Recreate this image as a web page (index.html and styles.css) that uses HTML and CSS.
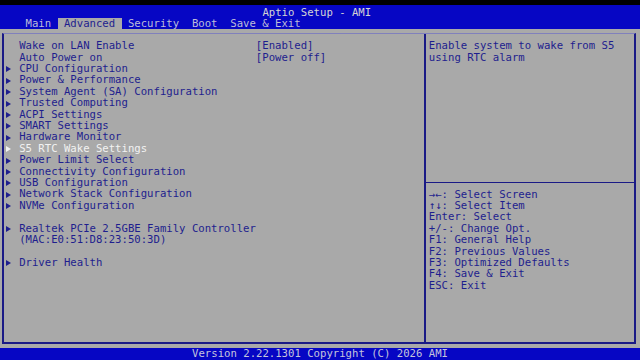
FILE: index.html
```html
<!DOCTYPE html>
<html lang="en">
<head>
    <meta charset="UTF-8">
    <title>Aptio Setup - AMI</title>
    <link rel="stylesheet" href="styles.css">
</head>
<body>
    <div class="screen">
        <header class="topbar">
            <div class="title">Aptio Setup - AMI</div>
            <nav class="tabs">
                <span class="tab">Main</span>
                <span class="tab active">Advanced</span>
                <span class="tab">Security</span>
                <span class="tab">Boot</span>
                <span class="tab">Save &amp; Exit</span>
            </nav>
        </header>
        <main class="body">
            <div class="frame">
                <section class="menu">
                    <div class="row setting"><span class="label">Wake on LAN Enable</span><span class="value">[Enabled]</span></div>
                    <div class="row setting"><span class="label">Auto Power on</span><span class="value">[Power off]</span></div>
                    <div class="row link">CPU Configuration</div>
                    <div class="row link">Power &amp; Performance</div>
                    <div class="row link">System Agent (SA) Configuration</div>
                    <div class="row link">Trusted Computing</div>
                    <div class="row link">ACPI Settings</div>
                    <div class="row link">SMART Settings</div>
                    <div class="row link">Hardware Monitor</div>
                    <div class="row link selected">S5 RTC Wake Settings</div>
                    <div class="row link">Power Limit Select</div>
                    <div class="row link">Connectivity Configuration</div>
                    <div class="row link">USB Configuration</div>
                    <div class="row link">Network Stack Configuration</div>
                    <div class="row link">NVMe Configuration</div>
                    <div class="row"></div>
                    <div class="row link">Realtek PCIe 2.5GBE Family Controller</div>
                    <div class="row sub">(MAC:E0:51:D8:23:50:3D)</div>
                    <div class="row"></div>
                    <div class="row link">Driver Health</div>
                </section>
                <aside class="side">
                    <div class="help">Enable system to wake from S5 using RTC alarm</div>
                    <div class="rule"></div>
                    <ul class="keys">
                        <li>&rarr;&larr;: Select Screen</li>
                        <li>&uarr;&darr;: Select Item</li>
                        <li>Enter: Select</li>
                        <li>+/-: Change Opt.</li>
                        <li>F1: General Help</li>
                        <li>F2: Previous Values</li>
                        <li>F3: Optimized Defaults</li>
                        <li>F4: Save &amp; Exit</li>
                        <li>ESC: Exit</li>
                    </ul>
                </aside>
            </div>
        </main>
        <footer class="footer">Version 2.22.1301 Copyright (C) 2026 AMI</footer>
    </div>
</body>
</html>
```

FILE: styles.css
```css
body {
    margin: 0;
    background: #000;
    font-family: "DejaVu Sans Mono", "Liberation Mono", monospace;
    font-size: 10.63px;
    line-height: 11.42px;
    color: #1e1e8e;
    overflow: hidden;
}

.screen {
    width: 640px;
    height: 360px;
    display: flex;
    flex-direction: column;
}

.topbar {
    margin-top: 5px;
    padding-top: 1.6px;
    height: 22.84px;
    background: #0606c4;
}

.title {
    height: 11.42px;
    padding-right: 1ch;
    text-align: center;
    color: #d4d4d4;
}

.tabs {
    display: flex;
    height: 11.42px;
    padding-left: 3ch;
}

.tab {
    padding: 0 1ch;
    color: #bcbcd8;
    white-space: pre;
}

.tab.active {
    background: #a9a9a9;
    color: #1e1e8e;
}

.body {
    flex: 1;
    background: #a9a9a9;
    padding-top: 3.4px;
}

.frame {
    display: flex;
    box-sizing: border-box;
    width: 634px;
    height: 311px;
    margin-left: 2px;
    border: 2px solid #1a1a86;
    border-top: 1px solid #8080bc;
}

.menu {
    box-sizing: border-box;
    width: 422px;
    padding: 6.3px 0 0 2.4px;
    border-right: 2px solid #1a1a86;
}

.row {
    height: 11.42px;
    white-space: pre;
}

.setting .label {
    display: inline-block;
    box-sizing: border-box;
    width: 39ch;
    padding-left: 2ch;
}

.link::before {
    content: "";
    display: inline-block;
    width: 0;
    height: 0;
    margin-right: calc(2ch - 5px);
    border-left: 5px solid currentColor;
    border-top: 3.5px solid transparent;
    border-bottom: 3.5px solid transparent;
    vertical-align: -0.5px;
}

.link.selected {
    color: #f2f2f2;
}

.sub {
    padding-left: 2ch;
}

.side {
    flex: 1;
    display: flex;
    flex-direction: column;
    padding-top: 6.3px;
}

.help {
    height: 137.04px;
    padding-left: 2.8px;
}

.rule {
    height: 1px;
    margin: 5.2px 0 5.22px;
    background: #1a1a86;
}

.keys {
    list-style: none;
    margin: 0;
    padding: 0 0 0 2.8px;
}

.keys li {
    height: 11.42px;
    white-space: pre;
}

.footer {
    height: 12px;
    line-height: 12px;
    background: #0606c4;
    color: #c4c4dc;
    text-align: center;
}
```
